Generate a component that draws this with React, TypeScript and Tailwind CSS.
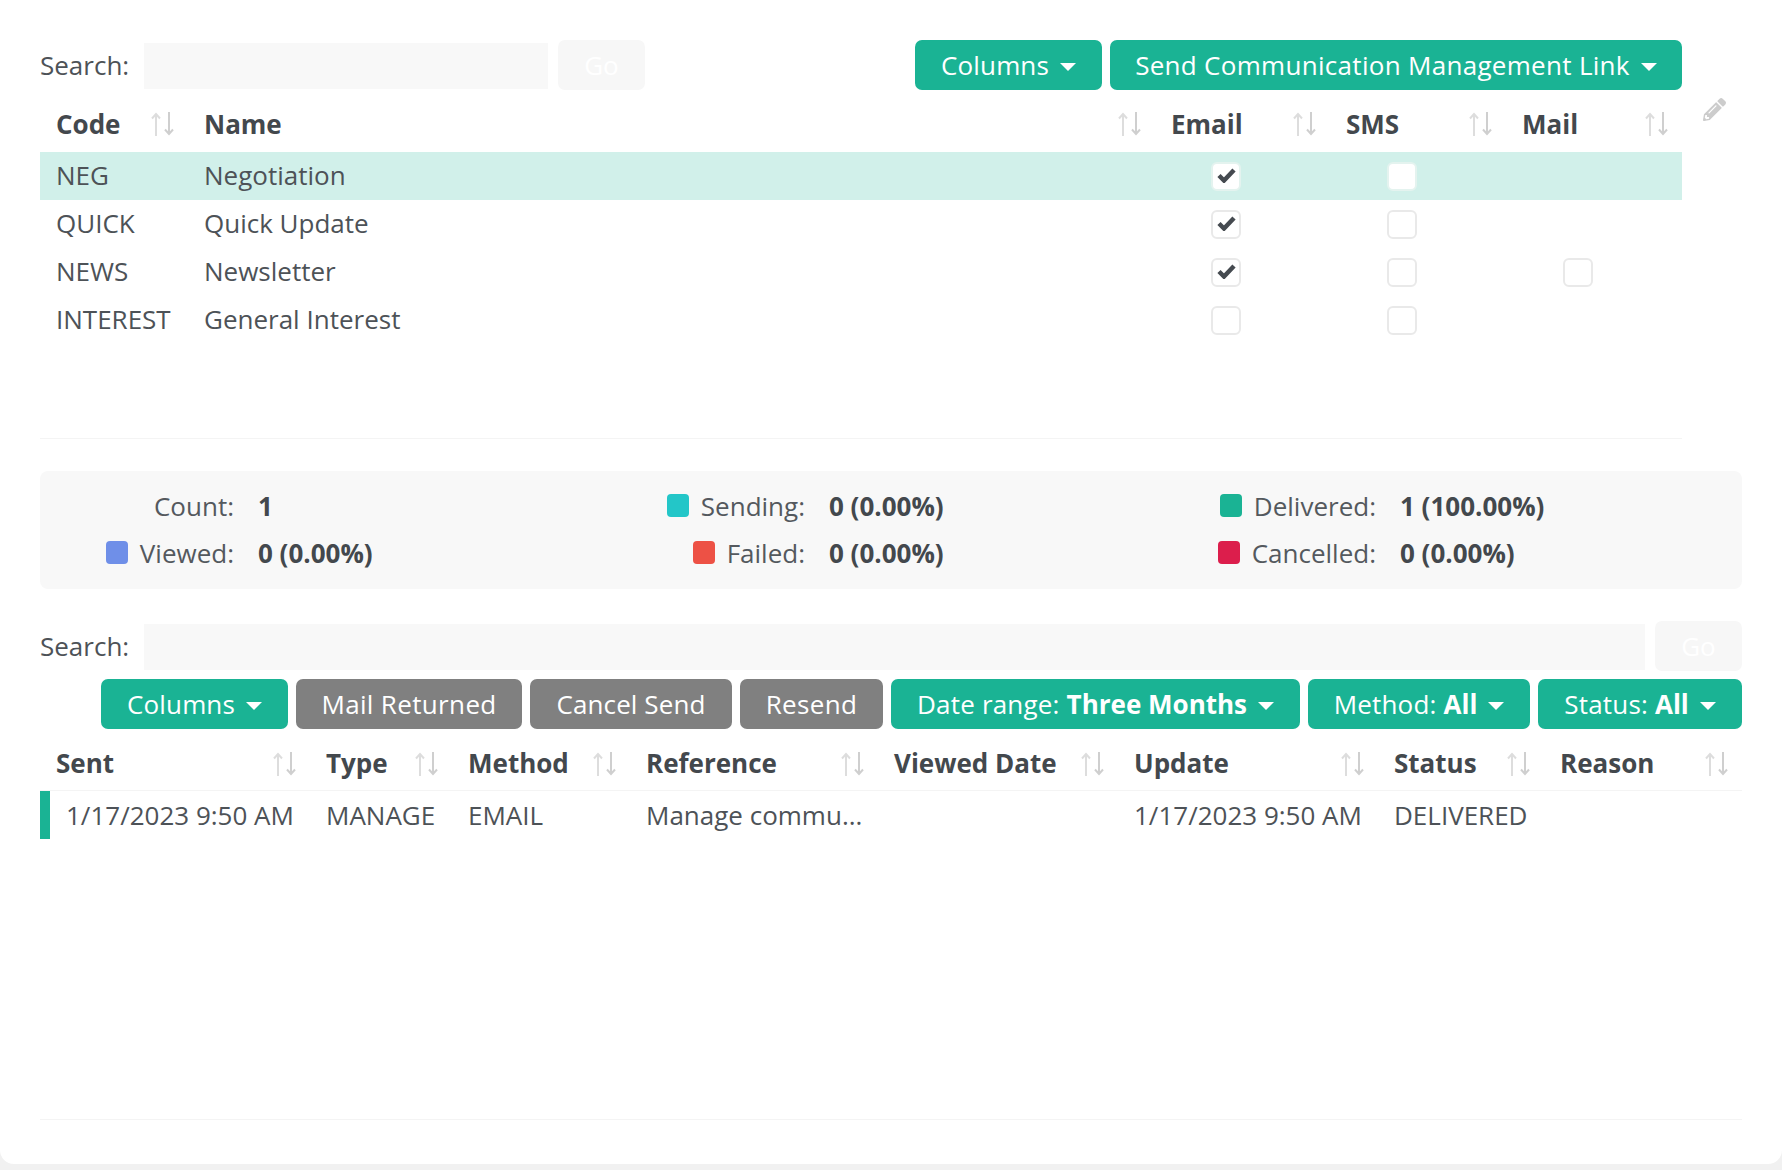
import React from 'react';
import { FaPencilAlt } from 'react-icons/fa';

function Caret() {
  return <span className="ml-[11px] mt-1 inline-block h-0 w-0 border-x-[8px] border-t-[8px] border-x-transparent border-t-white" />;
}

function Btn({ children, gray, caret = true, className = '' }: { children: React.ReactNode; gray?: boolean; caret?: boolean; className?: string }) {
  return (
    <button className={`flex h-[50px] items-center justify-center rounded-[7px] whitespace-nowrap text-white ${gray ? 'bg-[#808080]' : 'bg-[#1ab394]'} ${className}`}>
      {children}
      {caret && <Caret />}
    </button>
  );
}

function SortIcon() {
  return (
    <svg width="23" height="24" viewBox="0 0 23 24" fill="none" strokeWidth="2" className="shrink-0">
      <path d="M5 24V2M1 6.5 5 2l4 4.5" stroke="#dddddd" />
      <path d="M18 0v22M14 17.5l4 4.5 4-4.5" stroke="#cfcfcf" />
    </svg>
  );
}

function Head({ label }: { label?: string }) {
  return (
    <div className="flex items-center justify-between pl-4 pr-[14px]">
      <span className="font-bold text-[#43484d]">{label}</span>
      <SortIcon />
    </div>
  );
}

function Check({ on, tint }: { on?: boolean; tint?: boolean }) {
  return (
    <span className={`ml-14 flex h-[29px] w-[30px] items-center justify-center rounded-[6px] border-2 bg-white ${tint ? 'border-[#e4f3ef]' : 'border-[#e9e9e9]'}`}>
      {on && (
        <svg width="19" height="15" viewBox="0 0 19 15" fill="none" className="-mt-0.5">
          <path d="M2 7.5 7 12.5 17 2" stroke="#454a50" strokeWidth="4.5" />
        </svg>
      )}
    </span>
  );
}

function SearchBar({ wide }: { wide?: boolean }) {
  return (
    <div className={`flex items-center ${wide ? 'w-full' : ''}`}>
      <span className="w-[104px]">Search:</span>
      <input className={`mt-[2px] h-[46px] bg-[#f8f8f8] outline-none ${wide ? 'flex-1' : 'w-[404px]'}`} />
      <button className="ml-[10px] h-[50px] w-[87px] rounded-[7px] bg-[#f7f7f7] text-white">Go</button>
    </div>
  );
}

function Stat({ label, value, color }: { label: string; value: string; color?: string }) {
  return (
    <div className="grid grid-cols-[194px_1fr] items-center gap-x-6">
      <span className="flex items-center justify-end gap-3 text-[#54595e]">
        {color && <span className={`h-[23px] w-[22px] rounded-[4px] ${color}`} />}
        <span className="pt-px">{label}</span>
      </span>
      <span className="pt-px font-bold text-[#43484d]">{value}</span>
    </div>
  );
}

const topRows = [
  { code: 'NEG', name: 'Negotiation', email: true, sms: false, mail: false, active: true },
  { code: 'QUICK', name: 'Quick Update', email: true, sms: false, mail: false },
  { code: 'NEWS', name: 'Newsletter', email: true, sms: false, mail: true },
  { code: 'INTEREST', name: 'General Interest', email: false, sms: false, mail: false },
];

const logCols = ['Sent', 'Type', 'Method', 'Reference', 'Viewed Date', 'Update', 'Status', 'Reason'];

export default function App() {
  return (
    <div className="min-h-screen bg-[#f1f1f1] font-['Open_Sans',sans-serif] text-[26px] text-[#4d5257]">
      <div className="h-[1164px] rounded-b-[14px] bg-white px-10 pt-10">
        <div className="flex">
          <div className="w-[1642px]">
            <div className="flex items-center justify-between">
              <SearchBar />
              <div className="flex gap-2">
                <Btn className="w-[187px] tracking-[0.15px]">Columns</Btn>
                <Btn className="w-[572px] tracking-[0.3px]">Send Communication Management Link</Btn>
              </div>
            </div>

            <div className="mt-2 grid h-[54px] grid-cols-[148px_967px_175px_176px_176px] items-center pb-[2px]">
              <Head label="Code" />
              <Head label="Name" />
              <Head label="Email" />
              <Head label="SMS" />
              <Head label="Mail" />
            </div>

            {topRows.map(r => (
              <div key={r.code} className={`grid h-12 grid-cols-[148px_967px_176px_176px_175px] items-center ${r.active ? 'bg-[#d1f0ea]' : ''}`}>
                <span className="pb-px pl-4">{r.code}</span>
                <span className="pb-px pl-4">{r.name}</span>
                <Check on={r.email} tint={r.active} />
                <Check on={r.sms} tint={r.active} />
                {r.mail ? <Check /> : <span />}
              </div>
            ))}

            <div className="h-[95px] border-b border-[#f4f4f4]" />
          </div>
          <FaPencilAlt className="ml-[21px] mt-[58px] h-[23px] w-[23px] text-[#cccccc]" />
        </div>

        <div className="mt-8 grid h-[118px] grid-cols-[571px_571px_1fr] grid-rows-[47px_47px] content-start rounded-[8px] bg-[#f8f8f8] pt-[11px]">
          <Stat label="Count:" value="1" />
          <Stat label="Sending:" value="0 (0.00%)" color="bg-[#23c6c8]" />
          <Stat label="Delivered:" value="1 (100.00%)" color="bg-[#1ab394]" />
          <Stat label="Viewed:" value="0 (0.00%)" color="bg-[#6f8fe8]" />
          <Stat label="Failed:" value="0 (0.00%)" color="bg-[#ed5145]" />
          <Stat label="Cancelled:" value="0 (0.00%)" color="bg-[#dc1e4c]" />
        </div>

        <div className="mt-8">
          <SearchBar wide />
        </div>

        <div className="mt-2 flex justify-end gap-2">
          <Btn className="w-[187px] tracking-[0.15px]">Columns</Btn>
          <Btn gray caret={false} className="w-[226px] tracking-[0.35px]">Mail Returned</Btn>
          <Btn gray caret={false} className="w-[202px] tracking-[0.1px]">Cancel Send</Btn>
          <Btn gray caret={false} className="w-[143px] tracking-[0.35px]">Resend</Btn>
          <Btn className="w-[409px] tracking-[0.2px]">Date range:&nbsp;<b className="font-bold tracking-normal">Three Months</b></Btn>
          <Btn className="w-[222px] tracking-[0.2px]">Method:&nbsp;<b className="font-bold tracking-normal">All</b></Btn>
          <Btn className="w-[204px] tracking-[0.2px]">Status:&nbsp;<b className="font-bold tracking-normal">All</b></Btn>
        </div>

        <div className="mt-2 grid h-[54px] grid-cols-[270px_142px_178px_248px_240px_260px_166px_198px] items-center border-b border-[#f4f4f4]">
          {logCols.map(c => <Head key={c} label={c} />)}
        </div>
        <div className="grid h-12 grid-cols-[270px_142px_178px_248px_240px_260px_166px_198px] items-center whitespace-nowrap">
          <span className="flex h-full items-center border-l-[10px] border-[#1ab394] pl-4">1/17/2023 9:50 AM</span>
          <span className="pl-4">MANAGE</span>
          <span className="pl-4">EMAIL</span>
          <span className="pl-4">Manage commu...</span>
          <span />
          <span className="pl-4">1/17/2023 9:50 AM</span>
          <span className="pl-4">DELIVERED</span>
          <span />
        </div>
        <div className="h-[281px] border-b border-[#f4f4f4]" />
      </div>
    </div>
  );
}
